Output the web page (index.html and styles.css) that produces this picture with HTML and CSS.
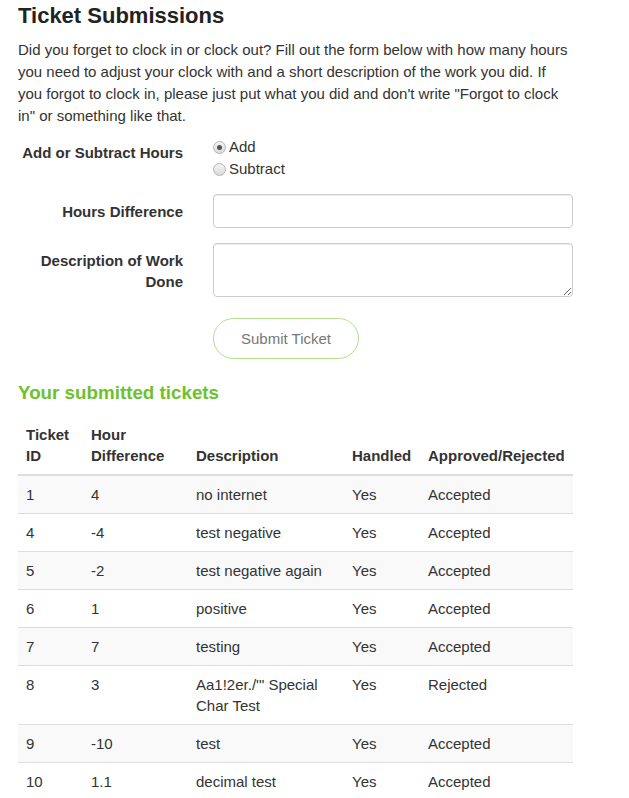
FILE: index.html
```html
<!DOCTYPE html>
<html>
<head>
<meta charset="utf-8">
<link rel="stylesheet" href="styles.css">
</head>
<body>
<div class="page">
  <h1 class="title">Ticket Submissions</h1>
  <p class="intro">Did you forget to clock in or clock out? Fill out the form below with how many hours you need to adjust your clock with and a short description of the work you did. If you forgot to clock in, please just put what you did and don't write "Forgot to clock in" or something like that.</p>

  <form class="form">
    <div class="group group-radio">
      <label class="label">Add or Subtract Hours</label>
      <div class="radios">
        <label class="radio"><input type="radio" name="op" checked> Add</label>
        <label class="radio"><input type="radio" name="op"> Subtract</label>
      </div>
    </div>
    <div class="group">
      <label class="label">Hours Difference</label>
      <input class="control" type="text">
    </div>
    <div class="group group-area">
      <label class="label">Description of Work Done</label>
      <textarea class="control area"></textarea>
    </div>
    <div class="group group-submit">
      <span></span>
      <div><button type="button" class="submit">Submit Ticket</button></div>
    </div>
  </form>

  <h2 class="subtitle">Your submitted tickets</h2>
  <table class="tickets">
    <colgroup>
      <col class="c1"><col class="c2"><col class="c3"><col class="c4"><col class="c5">
    </colgroup>
    <thead>
      <tr><th>Ticket ID</th><th>Hour Difference</th><th>Description</th><th>Handled</th><th>Approved/Rejected</th></tr>
    </thead>
    <tbody>
      <tr><td>1</td><td>4</td><td>no internet</td><td>Yes</td><td>Accepted</td></tr>
      <tr><td>4</td><td>-4</td><td>test negative</td><td>Yes</td><td>Accepted</td></tr>
      <tr><td>5</td><td>-2</td><td>test negative again</td><td>Yes</td><td>Accepted</td></tr>
      <tr><td>6</td><td>1</td><td>positive</td><td>Yes</td><td>Accepted</td></tr>
      <tr><td>7</td><td>7</td><td>testing</td><td>Yes</td><td>Accepted</td></tr>
      <tr><td>8</td><td>3</td><td>Aa1!2er./'" Special Char Test</td><td>Yes</td><td>Rejected</td></tr>
      <tr><td>9</td><td>-10</td><td>test</td><td>Yes</td><td>Accepted</td></tr>
      <tr><td>10</td><td>1.1</td><td>decimal test</td><td>Yes</td><td>Accepted</td></tr>
    </tbody>
  </table>
</div>
</body>
</html>
```

FILE: styles.css
```css
* { box-sizing: border-box; }
html, body { margin: 0; padding: 0; background: #fff; }
body {
  font-family: "Liberation Sans", Arial, sans-serif;
  font-size: 15px;
  line-height: 1.42857;
  color: #333;
}
.page { padding: 0 18px; width: 591px; }
.title {
  font-size: 22px;
  line-height: 26px;
  font-weight: bold;
  margin: 3px 0 10px;
  color: #222;
}
.intro { margin: 0 0 8px; line-height: 22px; }

.form { display: flex; flex-direction: column; }
.group {
  display: grid;
  grid-template-columns: 165px 360px;
  column-gap: 30px;
  margin-bottom: 15px;
}
.group-area { margin-bottom: 21px; }
.group-submit { margin-bottom: 0; }
.label {
  text-align: right;
  font-weight: bold;
  padding-top: 7px;
  line-height: 21px;
}
.radios { display: flex; flex-direction: column; padding-top: 1px; }
.group-radio { margin-bottom: 14px; }
.radio {
  display: flex;
  align-items: center;
  height: 22px;
  gap: 3px;
}
.radio input {
  -webkit-appearance: none;
  appearance: none;
  width: 13px;
  height: 13px;
  margin: 0;
  border-radius: 50%;
  border: 1px solid #b5b5b5;
  background: linear-gradient(#f4f4f4, #d9d9d9);
  position: relative;
}
.radio input:checked::after {
  content: "";
  position: absolute;
  left: 3px; top: 3px;
  width: 5px; height: 5px;
  border-radius: 50%;
  background: #555;
}
.control {
  display: block;
  width: 360px;
  height: 34px;
  border: 1px solid #ccc;
  border-radius: 4px;
  box-shadow: inset 0 1px 1px rgba(0,0,0,.075);
  font: inherit;
  padding: 6px 12px;
  background: #fff;
}
.area { height: 54px; resize: vertical; }
.submit {
  width: 146px;
  height: 41px;
  border: 1px solid #b3e08b;
  border-radius: 21px;
  background: #fff;
  color: #777;
  font: inherit;
  font-size: 15px;
  padding: 0;
}

.subtitle {
  color: #6ec12b;
  font-size: 18.8px;
  line-height: 22px;
  font-weight: bold;
  margin: 23px 0 12px;
}
.tickets {
  width: 555px;
  border-collapse: collapse;
  table-layout: fixed;
}
.c1 { width: 65px; }
.c2 { width: 105px; }
.c3 { width: 156px; }
.c4 { width: 76px; }
.c5 { width: 153px; }
.tickets th, .tickets td {
  padding: 8px;
  text-align: left;
  vertical-align: top;
  line-height: 21px;
}
.tickets th {
  vertical-align: bottom;
  border-bottom: 2px solid #ddd;
  font-weight: bold;
}
.tickets td { border-top: 1px solid #ddd; }
.tickets tbody tr:nth-child(odd) { background: #f9f9f9; }
```
